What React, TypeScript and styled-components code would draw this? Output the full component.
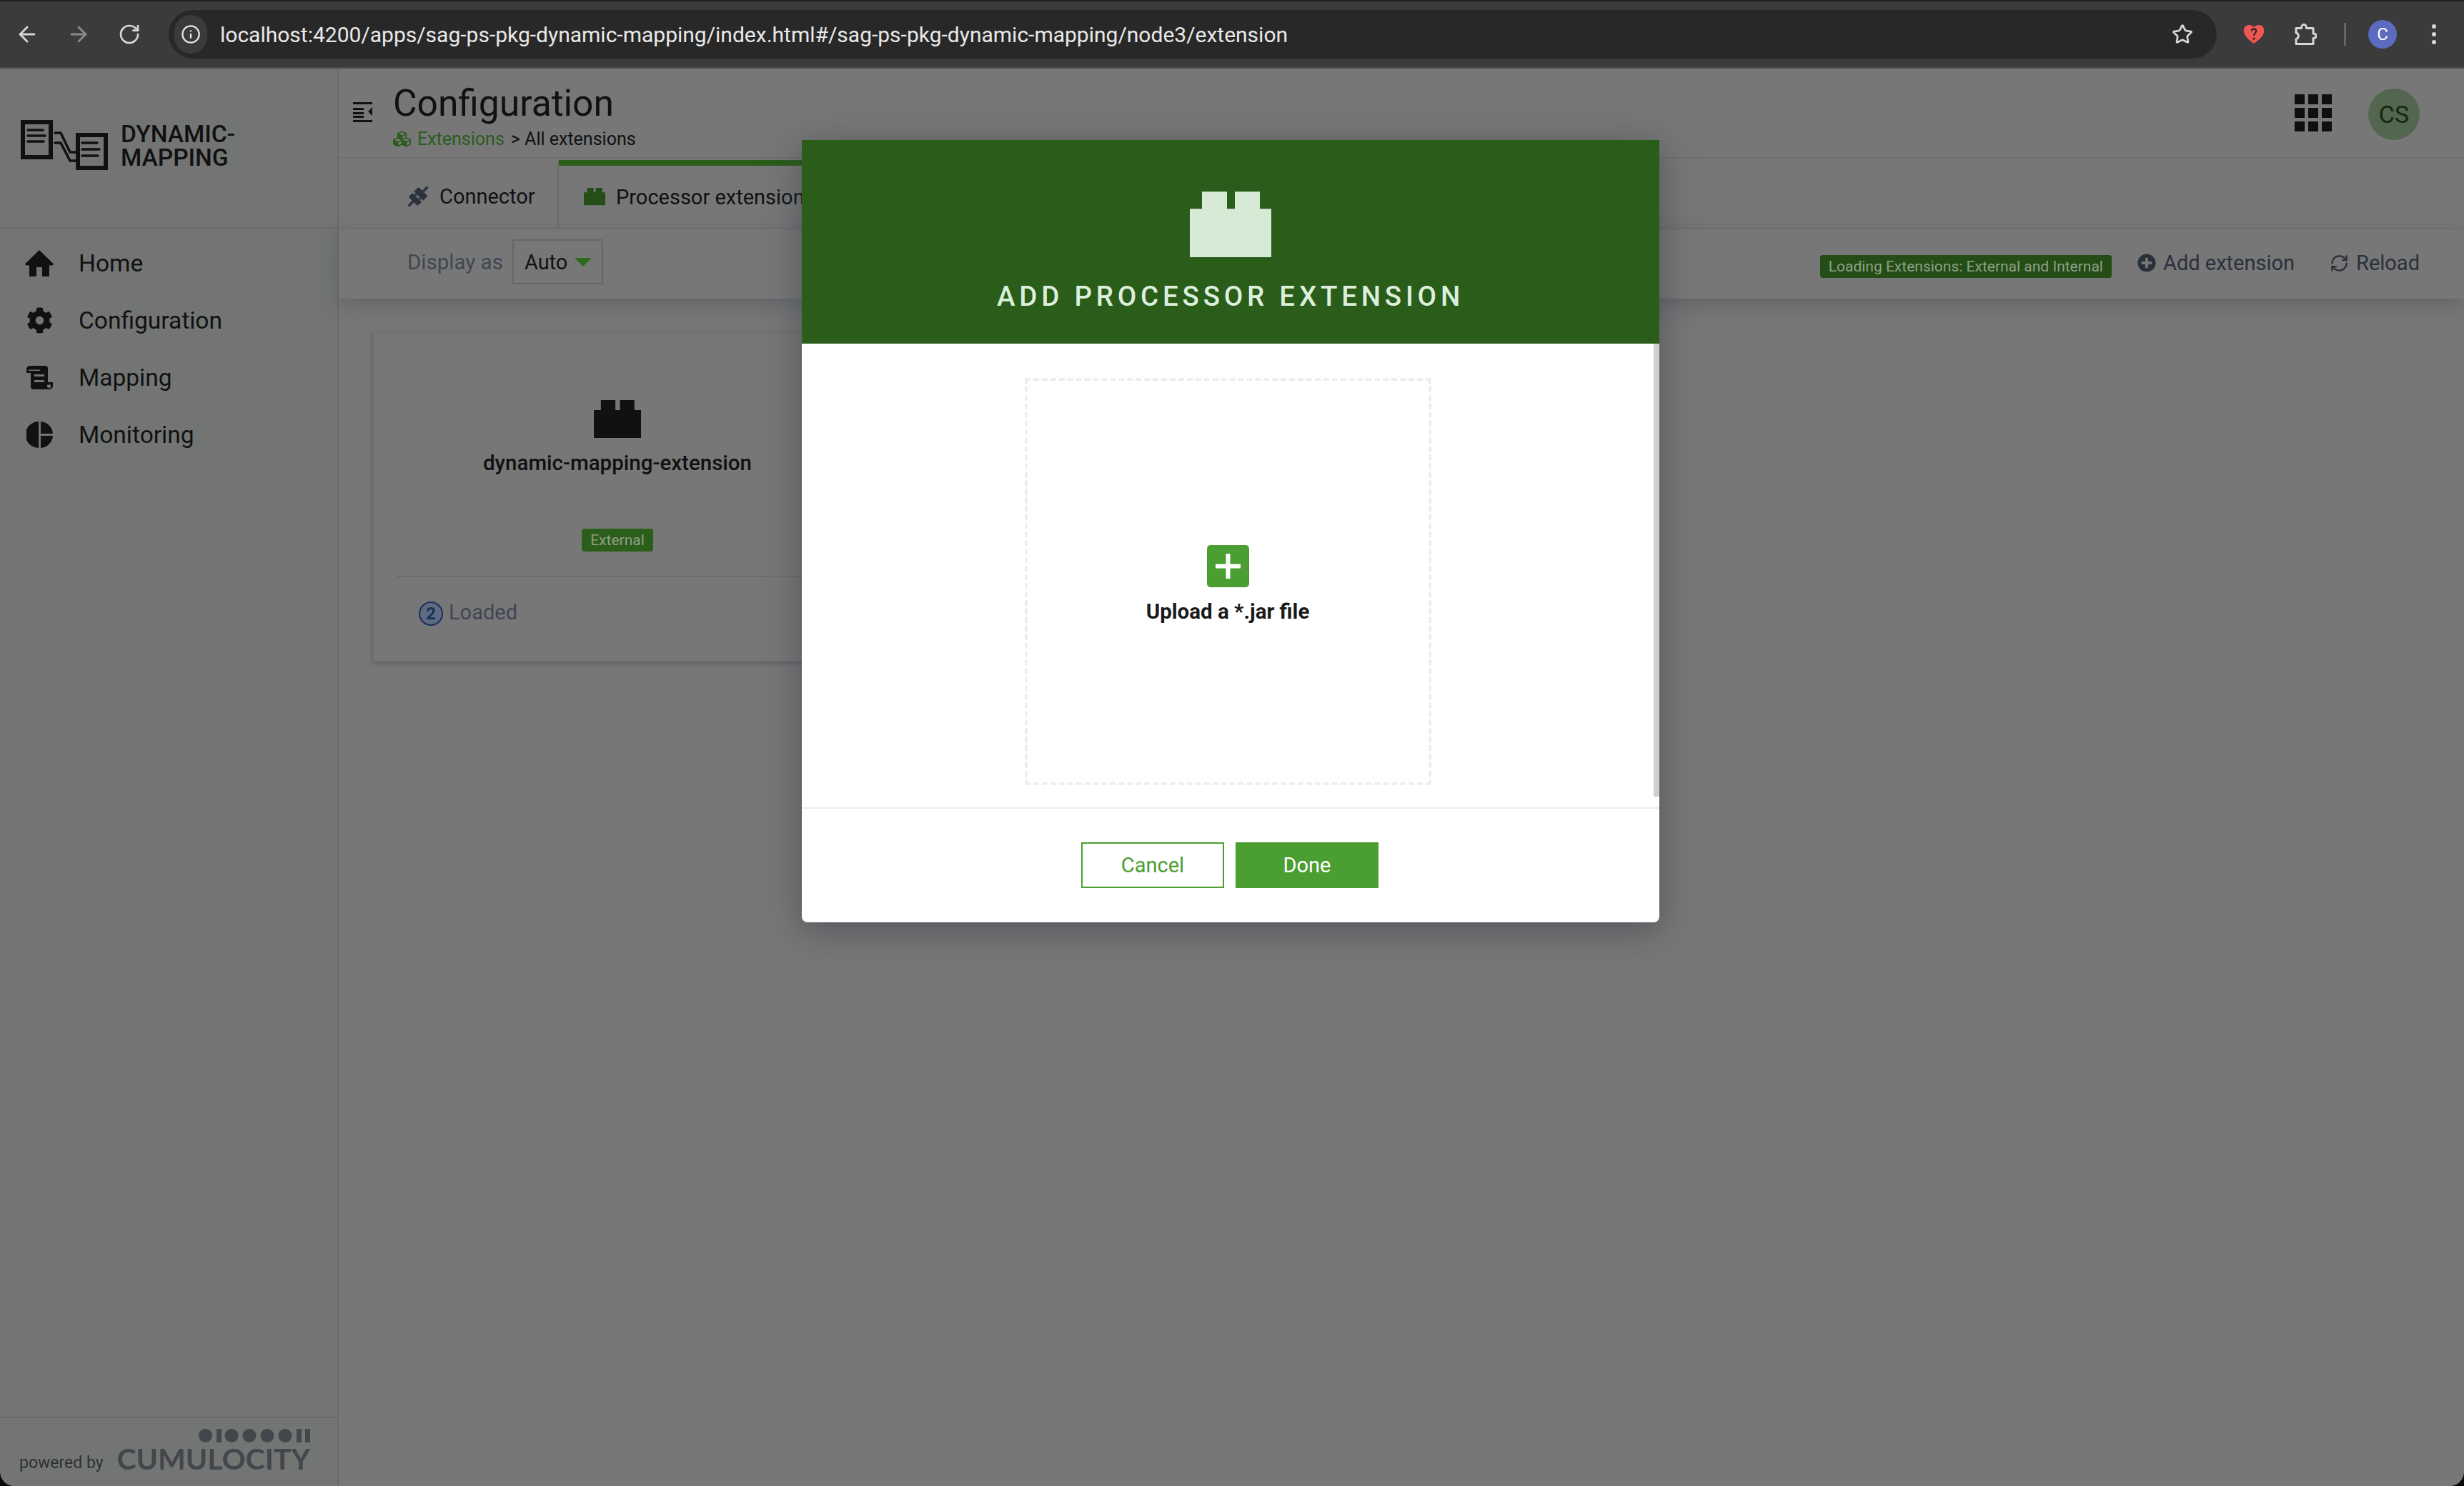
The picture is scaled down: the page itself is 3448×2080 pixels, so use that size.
import styled, { createGlobalStyle } from 'styled-components'
import { ArrowLeft, ArrowRight, RotateCw, Star, Info, RefreshCw } from 'lucide-react'
import { FaCog, FaCubes, FaPlusCircle } from 'react-icons/fa'

const GlobalStyle = createGlobalStyle`
  html, body {
    margin: 0;
    padding: 0;
    background: #07090c;
    overflow: hidden;
  }
  * { box-sizing: border-box; }
`

const FONT = `Roboto, "Liberation Sans", sans-serif`

function Brick({ color, size }: { color: string; size: number }) {
  return (
    <svg width={size} height={size * 0.81} viewBox="0 0 114 92" fill={color}>
      <path d="M0 24h17V0h35v24h11V0h35v24h16v68H0z" />
    </svg>
  )
}

function MappingLogo() {
  return (
    <svg width="123" height="70" viewBox="0 0 123 70" fill="none" stroke="#111" strokeLinecap="round">
      <rect x="3" y="3" width="39" height="49" strokeWidth="6" strokeLinecap="butt" />
      <path d="M10 14h21M10 22h24M10 30h22" strokeWidth="3.5" />
      <rect x="80" y="21" width="39" height="46" strokeWidth="6" strokeLinecap="butt" />
      <path d="M86 32h21M86 41h24M86 50h22" strokeWidth="3.5" />
      <path d="M48 18h8l13 27h10M48 32h8l13 25h10" strokeWidth="3.5" />
    </svg>
  )
}

function MenuToggleIcon() {
  return (
    <svg width="27" height="28" viewBox="0 0 27 28" fill="#111">
      <path d="M0 0h27v3H0zM0 8h15v3H0zM0 14h15v3H0zM0 19h15v3H0zM0 25h27v3H0zM27 7v12l-6-6z" />
    </svg>
  )
}

function HomeIcon() {
  return (
    <svg width="40" height="37" viewBox="0 0 40 37" fill="#111">
      <path d="M20 0l20 19.500-1.500 2H34V37H24V24h-8v13H6V21.500H1.500L0 19.500z" />
    </svg>
  )
}

function ScrollIcon() {
  return (
    <svg width="37" height="33" viewBox="0 0 37 33" fill="#111" fillRule="evenodd">
      <path d="M5 0h21a4 4 0 0 1 4 4v19h7v5a5 5 0 0 1-5 5H10a4 4 0 0 1-4-4V10H0V5a5 5 0 0 1 5-5zM3 5.500v1.500h16V5.500zM11 12v3h14v-3zM11 20v3h14v-3zM29 26.500v2a2.500 2.500 0 0 0 5 0v-2z" />
    </svg>
  )
}

function PieIcon() {
  return (
    <svg width="37" height="37" viewBox="0 0 38 38" fill="#111">
      <path d="M17.500 0v38A19 19 0 0 1 17.500 0zM20.500 0A19 19 0 0 1 38 17.500H20.500zM20.500 20.500H38A19 19 0 0 1 20.500 38z" />
    </svg>
  )
}

function PlugIcon() {
  return (
    <svg width="30" height="30" viewBox="0 0 30 30" fill="#2c323c">
      <g transform="rotate(-45 15 15)">
        <path d="M-4 13.250H5v3.500h-9z" />
        <path d="M5 7l2-1h6v18H7l-2-1z" />
        <path d="M13 9.500h3v3h-3zM13 17.500h3v3h-3z" />
        <path d="M16 6h7l2 1v16l-2 1h-7z" />
        <path d="M25 13.250h9v3.500h-9z" />
      </g>
    </svg>
  )
}

function HeartIcon() {
  return (
    <svg width="32" height="30" viewBox="0 0 32 30">
      <path
        d="M16 28.500C9 23.500 1.200 17.500 1.200 9.500 1.200 5 4.600 1.500 9 1.500c3 0 5.600 1.200 7 3.200 1.400-2 4-3.200 7-3.200 4.400 0 7.800 3.500 7.800 8 0 8-7.800 14-14.800 19z"
        fill="#ec5752"
        stroke="#3c3346"
        strokeWidth="1"
      />
      <path d="M12.800 10.500c0-4 6.400-4 6.400 0 0 3-3.200 3-3.200 6.500" fill="none" stroke="#1a1a1a" strokeWidth="1.800" />
      <circle cx="16" cy="21" r="1.500" fill="#1a1a1a" />
    </svg>
  )
}

function PuzzleIcon() {
  return (
    <svg width="32" height="32" viewBox="0 0 32 32" fill="none" stroke="#d6d6d6" strokeWidth="3">
      <path d="M3 7.500h7.500c0-7 7-7 7 0H27v7.500c5.500 0 5.500 6.500 0 6.500v8H3v-7c4.500 0 4.500-8.500 0-8.500z" strokeLinejoin="round" />
    </svg>
  )
}

function DotsLogo() {
  return (
    <svg width="156" height="19" viewBox="0 0 156 19" fill="#43464b">
      <circle cx="9.500" cy="9.500" r="9.500" />
      <rect x="25" y="0" width="7" height="19" />
      <circle cx="46" cy="9.500" r="9.500" />
      <circle cx="71" cy="9.500" r="9.500" />
      <circle cx="96" cy="9.500" r="9.500" />
      <circle cx="121" cy="9.500" r="9.500" />
      <rect x="137" y="0" width="7" height="19" />
      <rect x="149" y="0" width="7" height="19" />
    </svg>
  )
}

const NAV_ITEMS = [
  { label: 'Home', icon: <HomeIcon /> },
  { label: 'Configuration', icon: <FaCog size={37} /> },
  { label: 'Mapping', icon: <ScrollIcon /> },
  { label: 'Monitoring', icon: <PieIcon /> },
]

export default function App() {
  return (
    <Page>
      <GlobalStyle />
      <BrowserBar>
        <BrowserButtons>
          <ArrowLeft size={34} color="#d6d6d6" strokeWidth={2} />
          <ArrowRight size={34} color="#8a8a8a" strokeWidth={2} />
          <RotateCw size={32} color="#d6d6d6" strokeWidth={2} />
        </BrowserButtons>
        <UrlBar>
          <SiteInfo>
            <Info size={28} color="#e3e3e3" strokeWidth={2} />
          </SiteInfo>
          <UrlText>localhost:4200/apps/sag-ps-pkg-dynamic-mapping/index.html#/sag-ps-pkg-dynamic-mapping/node3/extension</UrlText>
          <Star size={30} color="#d6d6d6" strokeWidth={2.2} />
        </UrlBar>
        <BrowserActions>
          <HeartIcon />
          <ExtensionSlot>
            <PuzzleIcon />
          </ExtensionSlot>
          <ToolbarDivider />
          <ProfileBadge>C</ProfileBadge>
          <KebabMenu>
            <i />
            <i />
            <i />
          </KebabMenu>
        </BrowserActions>
      </BrowserBar>

      <Workspace>
        <Sidebar>
          <Brand>
            <MappingLogo />
            <BrandName>
              DYNAMIC-
              <br />
              MAPPING
            </BrandName>
          </Brand>
          <NavList>
            {NAV_ITEMS.map((item) => (
              <NavItem key={item.label}>
                <NavIcon>{item.icon}</NavIcon>
                {item.label}
              </NavItem>
            ))}
          </NavList>
          <PoweredBy>
            <PoweredLabel>powered by</PoweredLabel>
            <CumulocityMark>
              <DotsLogo />
              <CumulocityName>CUMULOCITY</CumulocityName>
            </CumulocityMark>
          </PoweredBy>
        </Sidebar>

        <Main>
          <TitleBar>
            <MenuToggle>
              <MenuToggleIcon />
            </MenuToggle>
            <TitleBlock>
              <PageTitle>Configuration</PageTitle>
              <Breadcrumb>
                <FaCubes size={25} color="#2a5c1e" />
                <CrumbLink>Extensions</CrumbLink>
                <span>&gt; All extensions</span>
              </Breadcrumb>
            </TitleBlock>
            <TitleActions>
              <AppGrid>
                {Array.from({ length: 9 }, (_, i) => (
                  <i key={i} />
                ))}
              </AppGrid>
              <UserAvatar>CS</UserAvatar>
            </TitleActions>
          </TitleBar>

          <TabBar>
            <Tab>
              <PlugIcon />
              Connector
            </Tab>
            <Tab $active>
              <Brick color="#234e17" size={30} />
              Processor extension
            </Tab>
          </TabBar>

          <ActionBar>
            <DisplayLabel>Display as</DisplayLabel>
            <DisplaySelect>
              Auto
              <SelectCaret />
            </DisplaySelect>
            <ActionsRight>
              <LoadingBadge>Loading Extensions: External and Internal</LoadingBadge>
              <ActionLink $offset={36}>
                <FaPlusCircle size={26} color="#2a303a" />
                Add extension
              </ActionLink>
              <ActionLink $offset={49}>
                <RefreshCw size={27} color="#2a303a" strokeWidth={2} />
                Reload
              </ActionLink>
            </ActionsRight>
          </ActionBar>

          <Content>
            <ExtensionCard>
              <CardBody>
                <Brick color="#111" size={66} />
                <CardName>dynamic-mapping-extension</CardName>
                <CardBadge>External</CardBadge>
              </CardBody>
              <CardFooter>
                <CountCircle>2</CountCircle>
                <span>Loaded</span>
              </CardFooter>
            </ExtensionCard>
          </Content>
        </Main>
      </Workspace>

      <Modal>
        <ModalHeader>
          <Brick color="#d6ead6" size={114} />
          <ModalTitle>ADD PROCESSOR EXTENSION</ModalTitle>
        </ModalHeader>
        <ModalBody>
          <DropZone>
            <PlusSquare>
              <svg width="35" height="35" viewBox="0 0 35 35" fill="#fff">
                <path d="M14.500 0h6v14.500H35v6H20.500V35h-6V20.500H0v-6h14.500z" />
              </svg>
            </PlusSquare>
            <DropLabel>Upload a *.jar file</DropLabel>
          </DropZone>
          <ScrollThumb />
        </ModalBody>
        <ModalFooter>
          <OutlineButton>Cancel</OutlineButton>
          <PrimaryButton>Done</PrimaryButton>
        </ModalFooter>
      </Modal>
    </Page>
  )
}

const Page = styled.div`
  position: relative;
  display: flex;
  flex-direction: column;
  width: 100%;
  height: 100vh;
  font-family: ${FONT};
  color: #111;
  overflow: hidden;
  border-radius: 0 0 20px 20px;
`

const BrowserBar = styled.header`
  display: flex;
  align-items: center;
  flex: 0 0 96px;
  padding: 0 0 0 21px;
  background: #3b3b3b;
  border-top: 2px solid #222;
  border-bottom: 2px solid #4c4c4c;
`

const BrowserButtons = styled.div`
  display: flex;
  align-items: center;
  gap: 38px;
  width: 215px;
`

const UrlBar = styled.div`
  display: flex;
  align-items: center;
  width: 2866px;
  height: 68px;
  padding: 0 33px 0 8px;
  background: #282828;
  border-radius: 34px;
`

const SiteInfo = styled.span`
  display: flex;
  align-items: center;
  justify-content: center;
  width: 46px;
  height: 54px;
  border-radius: 27px;
  background: #3b3b3b;
`

const UrlText = styled.span`
  flex: 1;
  margin-left: 18px;
  font-size: 30px;
  color: #e8e8e8;
  white-space: nowrap;
`

const BrowserActions = styled.div`
  display: flex;
  align-items: center;
  margin-left: 36px;
  gap: 38px;
`

const ExtensionSlot = styled.span`
  display: flex;
  margin-left: 2px;
`

const ToolbarDivider = styled.span`
  width: 3px;
  height: 32px;
  background: #666;
`

const ProfileBadge = styled.span`
  display: flex;
  align-items: center;
  justify-content: center;
  width: 40px;
  height: 40px;
  margin-left: -7px;
  border-radius: 50%;
  background: #5c6bc0;
  color: #fff;
  font-size: 24px;
`

const KebabMenu = styled.span`
  display: flex;
  flex-direction: column;
  gap: 5px;
  margin-left: 11px;

  i {
    display: block;
    width: 6px;
    height: 6px;
    border-radius: 50%;
    background: #d6d6d6;
  }
`

const Workspace = styled.div`
  display: flex;
  flex: 1;
  min-height: 0;
`

const Sidebar = styled.aside`
  display: flex;
  flex-direction: column;
  flex: 0 0 474px;
  background: #737574;
  border-right: 2px solid #696b6a;
`

const Brand = styled.div`
  display: flex;
  align-items: flex-start;
  gap: 17px;
  height: 224px;
  padding: 72px 0 0 29px;
  border-bottom: 2px solid #696b6a;
`

const BrandName = styled.div`
  margin-top: 3px;
  font-size: 33.500px;
  line-height: 33px;
  font-weight: 500;
  color: #111;
`

const NavList = styled.nav`
  display: flex;
  flex-direction: column;
  flex: 1;
  padding-top: 8px;
`

const NavItem = styled.a`
  display: flex;
  align-items: center;
  height: 80px;
  font-size: 33.500px;
  color: #111;
`

const NavIcon = styled.span`
  display: flex;
  align-items: center;
  justify-content: center;
  width: 110px;
`

const PoweredBy = styled.footer`
  display: flex;
  align-items: flex-end;
  justify-content: space-between;
  height: 97px;
  padding: 0 38px 19px 27px;
  border-top: 2px solid #696b6a;
`

const PoweredLabel = styled.span`
  font-size: 23px;
  color: #2e3034;
`

const CumulocityMark = styled.div`
  display: flex;
  flex-direction: column;
  align-items: flex-end;
  gap: 4px;
`

const CumulocityName = styled.span`
  font-family: Lato, sans-serif;
  font-size: 41px;
  line-height: 38px;
  font-weight: 700;
  color: #43464b;
`

const Main = styled.main`
  display: flex;
  flex-direction: column;
  flex: 1;
  min-width: 0;
  background: #777;
`

const TitleBar = styled.div`
  display: flex;
  align-items: flex-start;
  flex: 0 0 126px;
  padding-left: 20px;
  border-bottom: 2px solid #707070;
`

const MenuToggle = styled.span`
  margin-top: 47px;
`

const TitleBlock = styled.div`
  display: flex;
  flex-direction: column;
  margin-left: 29px;
  padding-top: 19px;
`

const PageTitle = styled.h1`
  margin: 0;
  font-size: 51.500px;
  line-height: 60px;
  font-weight: 400;
  color: #111;
`

const Breadcrumb = styled.div`
  display: flex;
  align-items: center;
  gap: 9px;
  margin-top: 5px;
  font-size: 25px;
  color: #111;
`

const CrumbLink = styled.span`
  color: #2a5c1e;
`

const TitleActions = styled.div`
  display: flex;
  align-items: center;
  gap: 51px;
  margin-left: auto;
  padding: 28px 62px 0 0;
`

const AppGrid = styled.div`
  display: grid;
  grid-template-columns: repeat(3, 14px);
  grid-auto-rows: 14px;
  gap: 5px;
  margin-top: -4px;

  i {
    display: block;
    background: #0f0f0f;
  }
`

const UserAvatar = styled.div`
  display: flex;
  align-items: center;
  justify-content: center;
  width: 72px;
  height: 72px;
  border-radius: 50%;
  background: #53664f;
  color: #0f2b0c;
  font-size: 34px;
`

const TabBar = styled.div`
  display: flex;
  flex: 0 0 97px;
  border-bottom: 2px solid #707070;
`

const Tab = styled.div<{ $active?: boolean }>`
  display: flex;
  align-items: center;
  gap: 15px;
  height: ${(p) => (p.$active ? '95px' : '97px')};
  margin-top: ${(p) => (p.$active ? '2px' : '0')};
  font-size: 29px;
  padding-left: ${(p) => (p.$active ? '35px' : '96px')};
  width: ${(p) => (p.$active ? '380px' : '308px')};
  color: #111;
  white-space: nowrap;
  border-top: 8px solid ${(p) => (p.$active ? '#2a5c1a' : 'transparent')};
  border-right: ${(p) => (p.$active ? '0' : '2px solid #6c6c6c')};
`

const ActionBar = styled.div`
  position: relative;
  display: flex;
  align-items: center;
  flex: 0 0 97px;
  padding: 0 62px 6px 96px;
  background: #777;
  box-shadow: 0 8px 24px rgba(60, 66, 76, 0.35);
`

const DisplayLabel = styled.span`
  font-size: 29.500px;
  color: #3f4652;
`

const DisplaySelect = styled.div`
  display: flex;
  align-items: center;
  gap: 10px;
  width: 127px;
  height: 63px;
  margin-left: 13px;
  padding-left: 15px;
  border: 2px solid #666;
  font-size: 29px;
  color: #111;
`

const SelectCaret = styled.span`
  width: 0;
  height: 0;
  border-left: 12px solid transparent;
  border-right: 12px solid transparent;
  border-top: 12px solid #2f6b1f;
`

const ActionsRight = styled.div`
  display: flex;
  align-items: center;
  margin-left: auto;
  margin-top: 3px;
`

const LoadingBadge = styled.span`
  margin-top: 10px;
  padding: 0 12px;
  height: 32px;
  line-height: 32px;
  font-size: 21px;
  color: #8f9f88;
  background: #244d16;
  border-radius: 4px;
`

const ActionLink = styled.span<{ $offset: number }>`
  display: flex;
  align-items: center;
  gap: 10px;
  margin-left: ${(p) => p.$offset}px;
  font-size: 29px;
  color: #2a303a;
`

const Content = styled.div`
  flex: 1;
  padding: 47px 0 0 48px;
`

const ExtensionCard = styled.article`
  display: flex;
  flex-direction: column;
  width: 684px;
  height: 461px;
  background: #777;
  border: 1px solid #717171;
  box-shadow: 0 2px 6px rgba(40, 44, 50, 0.4);
`

const CardBody = styled.div`
  display: flex;
  flex-direction: column;
  align-items: center;
  height: 342px;
  margin: 0 32px;
  padding-top: 94px;
  border-bottom: 2px solid #6c6c6c;
`

const CardName = styled.div`
  margin-top: 17px;
  font-size: 29.500px;
  line-height: 36px;
  font-weight: 500;
  color: #111;
`

const CardBadge = styled.span`
  margin-top: 74px;
  padding: 0 12px;
  height: 32px;
  line-height: 32px;
  font-size: 21px;
  color: #8f9f88;
  background: #2b5e1a;
  border-radius: 4px;
`

const CardFooter = styled.div`
  display: flex;
  align-items: center;
  gap: 8px;
  padding: 30px 0 0 63px;
  font-size: 29px;
  color: #3f4652;
`

const CountCircle = styled.span`
  display: flex;
  align-items: center;
  justify-content: center;
  width: 34px;
  height: 34px;
  margin-top: 4px;
  border: 2px solid #17305c;
  border-radius: 50%;
  background: #5e6b80;
  color: #17305c;
  font-size: 24px;
  font-weight: 700;
`

const Modal = styled.section`
  position: absolute;
  top: 196px;
  left: 1122px;
  display: flex;
  flex-direction: column;
  width: 1200px;
  height: 1095px;
  background: #fff;
  border-radius: 0 0 8px 8px;
  box-shadow: 0 10px 50px rgba(50, 56, 66, 0.55);
`

const ModalHeader = styled.div`
  display: flex;
  flex-direction: column;
  align-items: center;
  flex: 0 0 285px;
  padding-top: 72px;
  background: #2a5c1a;
`

const ModalTitle = styled.h2`
  margin: 32px 0 0;
  font-size: 38.500px;
  line-height: 46px;
  font-weight: 500;
  letter-spacing: 0.15em;
  color: #dcefdc;
`

const ModalBody = styled.div`
  position: relative;
  display: flex;
  justify-content: center;
  flex: 0 0 651px;
  padding: 48px 8px 0 0;
  border-bottom: 2px solid #ececec;
`

const DropZone = styled.div`
  display: flex;
  flex-direction: column;
  align-items: center;
  width: 569px;
  height: 570px;
  padding-top: 230px;
  border: 4px dashed #eeeeee;
`

const PlusSquare = styled.div`
  display: flex;
  align-items: center;
  justify-content: center;
  width: 59px;
  height: 59px;
  border-radius: 5px;
  background: #4a9e32;
`

const DropLabel = styled.div`
  margin-top: 16px;
  font-size: 29.500px;
  line-height: 36px;
  font-weight: 700;
  color: #1a1a1a;
`

const ScrollThumb = styled.span`
  position: absolute;
  top: 0;
  right: 0;
  width: 8px;
  height: 634px;
  background: #cfcfcf;
`

const ModalFooter = styled.div`
  display: flex;
  justify-content: center;
  gap: 16px;
  padding: 47px 2px 0 0;
`

const OutlineButton = styled.button`
  width: 200px;
  height: 64px;
  background: #fff;
  border: 2px solid #4a9e32;
  color: #4a9e32;
  font-family: ${FONT};
  font-size: 29px;
`

const PrimaryButton = styled(OutlineButton)`
  background: #4a9e32;
  color: #fff;
`
